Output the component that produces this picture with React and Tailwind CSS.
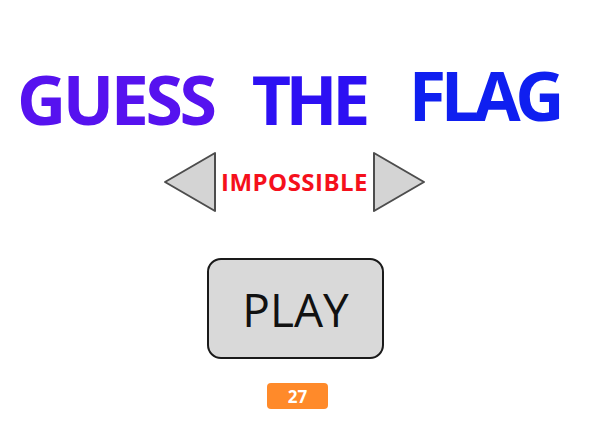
import React from 'react';

const FONT = { fontFamily: '"Open Sans", "DejaVu Sans", sans-serif' };

function Arrow({ dir }) {
  const pts = dir === 'left' ? '2,31 52,2 52,60' : '2,2 52,31 2,60';
  return (
    <svg width="54" height="62" viewBox="0 0 54 62" className="shrink-0">
      <polygon points={pts} fill="#d4d4d4" stroke="#4d4d4d" strokeWidth="2" strokeLinejoin="round" />
    </svg>
  );
}

export default function App() {
  return (
    <div className="w-[592px] h-[430px] bg-white flex flex-col items-center overflow-hidden" style={FONT}>
      {/* Title */}
      <div className="mt-[61px] flex items-end text-[68px] leading-none font-bold mr-[16px]">
        <span className="text-[#5612ef] tracking-[-0.05em]">GUESS</span>
        <span className="ml-[38px] text-[#2d10f3] tracking-[-0.08em]">THE</span>
        <span className="ml-[44px] mb-[4px] text-[#0f1ff0] tracking-[-0.08em]">FLAG</span>
      </div>

      {/* Difficulty selector */}
      <div className="mt-[18px] flex items-center gap-[4px] ml-[-3px]">
        <Arrow dir="left" />
        <span className="text-[24px] leading-none font-bold text-[#f5101c] tracking-[0.02em]">IMPOSSIBLE</span>
        <Arrow dir="right" />
      </div>

      {/* Play button */}
      <button className="mt-[45px] w-[177px] h-[101px] ml-[-1px] rounded-[14px] border-2 border-[#1a1a1a] bg-[#d9d9d9] flex items-center justify-center">
        <span className="text-[46px] leading-none text-[#111111]">PLAY</span>
      </button>

      {/* Score badge */}
      <div className="mt-[24px] ml-[3px] w-[61px] h-[26px] rounded-[4px] bg-[#ff8a2a] flex items-center justify-center text-white font-bold text-[17px] leading-none">
        27
      </div>
    </div>
  );
}
